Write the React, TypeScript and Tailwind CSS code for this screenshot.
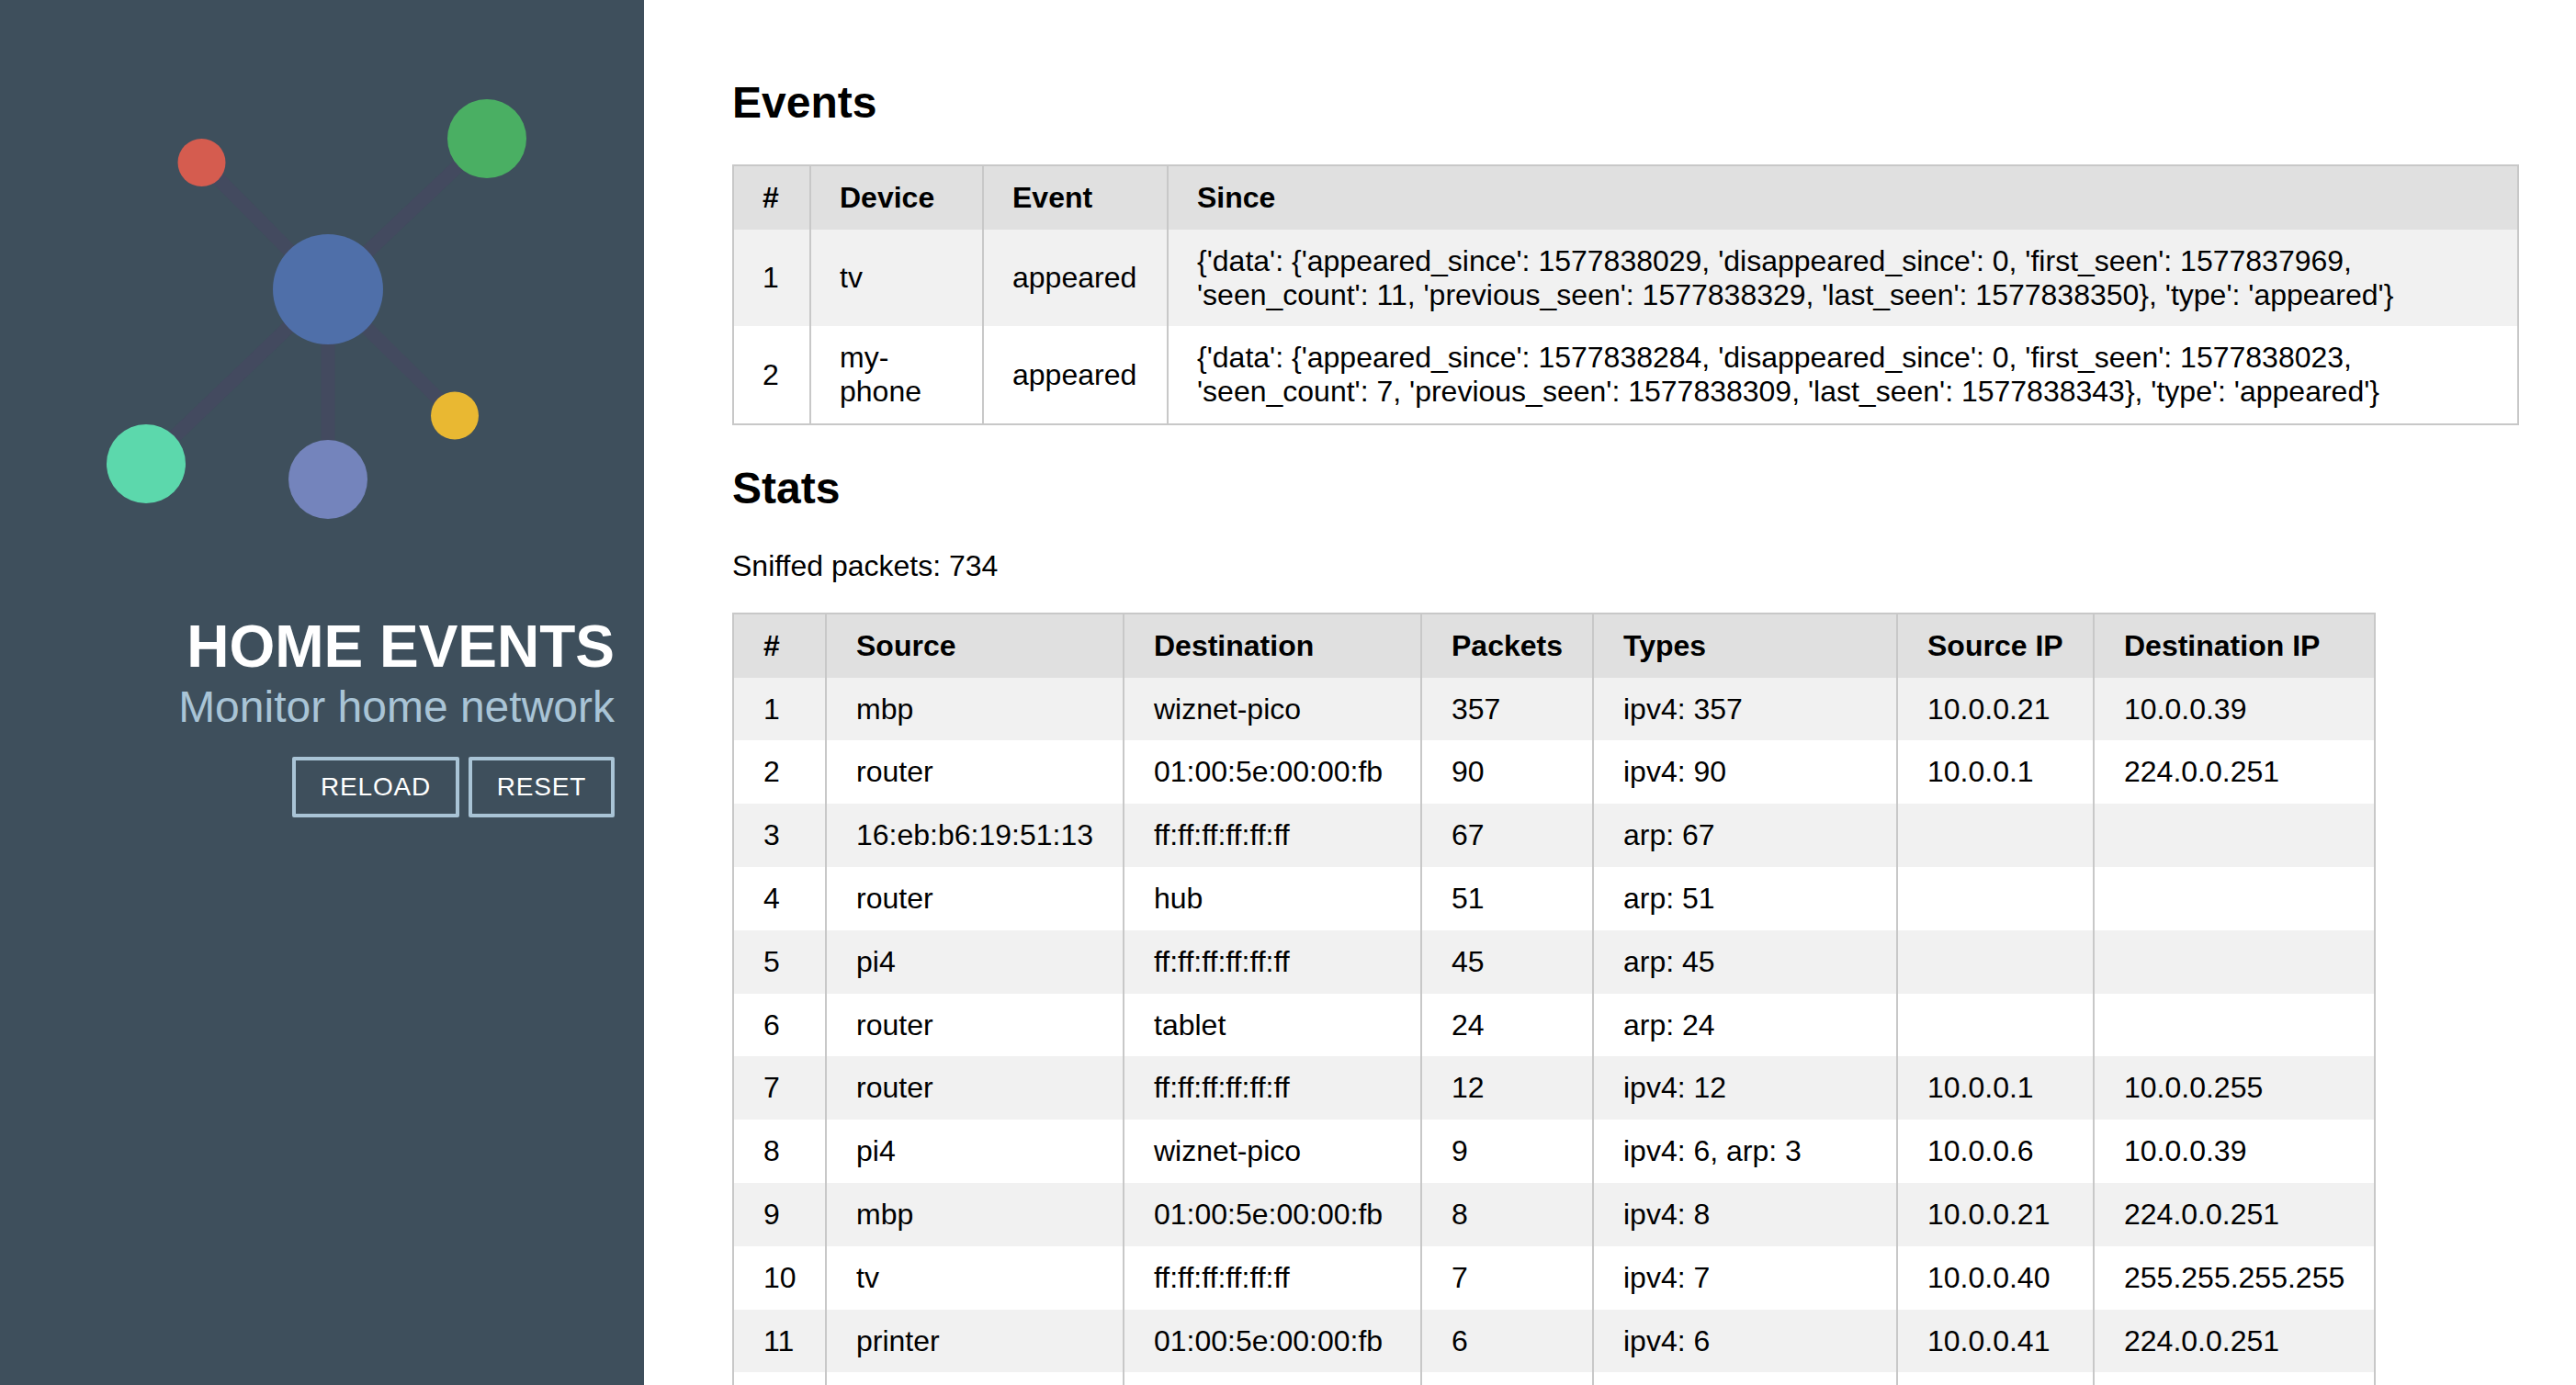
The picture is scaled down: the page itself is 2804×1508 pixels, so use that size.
const EVENTS = [
  {
    id: 1,
    device: 'tv',
    event: 'appeared',
    since: "{'data': {'appeared_since': 1577838029, 'disappeared_since': 0, 'first_seen': 1577837969, 'seen_count': 11, 'previous_seen': 1577838329, 'last_seen': 1577838350}, 'type': 'appeared'}",
  },
  {
    id: 2,
    device: 'my-phone',
    event: 'appeared',
    since: "{'data': {'appeared_since': 1577838284, 'disappeared_since': 0, 'first_seen': 1577838023, 'seen_count': 7, 'previous_seen': 1577838309, 'last_seen': 1577838343}, 'type': 'appeared'}",
  },
];

const STATS = [
  ['1', 'mbp', 'wiznet-pico', '357', 'ipv4: 357', '10.0.0.21', '10.0.0.39'],
  ['2', 'router', '01:00:5e:00:00:fb', '90', 'ipv4: 90', '10.0.0.1', '224.0.0.251'],
  ['3', '16:eb:b6:19:51:13', 'ff:ff:ff:ff:ff:ff', '67', 'arp: 67', '', ''],
  ['4', 'router', 'hub', '51', 'arp: 51', '', ''],
  ['5', 'pi4', 'ff:ff:ff:ff:ff:ff', '45', 'arp: 45', '', ''],
  ['6', 'router', 'tablet', '24', 'arp: 24', '', ''],
  ['7', 'router', 'ff:ff:ff:ff:ff:ff', '12', 'ipv4: 12', '10.0.0.1', '10.0.0.255'],
  ['8', 'pi4', 'wiznet-pico', '9', 'ipv4: 6, arp: 3', '10.0.0.6', '10.0.0.39'],
  ['9', 'mbp', '01:00:5e:00:00:fb', '8', 'ipv4: 8', '10.0.0.21', '224.0.0.251'],
  ['10', 'tv', 'ff:ff:ff:ff:ff:ff', '7', 'ipv4: 7', '10.0.0.40', '255.255.255.255'],
  ['11', 'printer', '01:00:5e:00:00:fb', '6', 'ipv4: 6', '10.0.0.41', '224.0.0.251'],
  ['', '', '', '', '', '', ''],
];

const STATS_HEAD = ['#', 'Source', 'Destination', 'Packets', 'Types', 'Source IP', 'Destination IP'];

const TH = 'border-x-2 border-[#c8c8c8] bg-[#e0e0e0] pl-[31px] pr-[32px] py-[16px] text-left font-bold';
const TD = 'border-x-2 border-[#c8c8c8] pl-[31px] pr-[32px] py-[16px] text-left';
const STATS_TH = 'border-x-2 border-[#c8c8c8] bg-[#e0e0e0] pl-[32px] pr-[32px] py-[16px] text-left font-bold';
const STATS_TD = 'border-x-2 border-[#c8c8c8] pl-[32px] pr-[32px] py-[16px] text-left';

function NetworkLogo() {
  return (
    <svg width="701" height="600" viewBox="0 0 701 600" className="block">
      <g stroke="#434a5f" strokeWidth="15">
        <line x1="357" y1="315" x2="530" y2="151" />
        <line x1="357" y1="315" x2="220" y2="177" />
        <line x1="357" y1="315" x2="495" y2="452" />
        <line x1="357" y1="315" x2="159" y2="505" />
        <line x1="357" y1="315" x2="357" y2="522" />
      </g>
      <circle cx="357" cy="315" r="60" fill="#4f6fa9" />
      <circle cx="530" cy="151" r="43" fill="#4aaf63" />
      <circle cx="219.5" cy="177" r="26" fill="#d55c4f" />
      <circle cx="495" cy="452.5" r="26" fill="#e9b832" />
      <circle cx="159" cy="505" r="43" fill="#5cd8ac" />
      <circle cx="357" cy="522" r="43" fill="#7484bc" />
    </svg>
  );
}

export default function App() {
  return (
    <div className="flex h-screen overflow-hidden bg-white font-['Liberation_Sans',Arial,sans-serif] text-[32px] leading-[36.8px] text-black">
      {/* Sidebar */}
      <aside className="w-[701px] flex-shrink-0 bg-[#3e4f5c] flex flex-col items-end pr-[32px]">
        <div className="-mr-[32px]">
          <NetworkLogo />
        </div>
        <h1 className="mt-[67px] text-[64px] leading-[74px] font-bold text-white">HOME EVENTS</h1>
        <p className="mt-[1px] text-[48px] leading-[55px] text-[#a9c4d6]">Monitor home network</p>
        <div className="mt-[27px] flex gap-[10px]">
          <button className="h-[66px] w-[182px] rounded-[2px] border-[4px] border-[#a9c4d6] text-[28px] tracking-[0.8px] text-white">RELOAD</button>
          <button className="h-[66px] w-[159px] rounded-[2px] border-[4px] border-[#a9c4d6] text-[28px] tracking-[0.8px] text-white">RESET</button>
        </div>
      </aside>

      {/* Main */}
      <main className="flex-1 min-w-0 pl-[96px] pr-[62px] pt-[84px]">
        <h2 className="mb-[40px] text-[48px] leading-[55px] font-bold">Events</h2>
        <table className="w-[1945px] table-fixed border-collapse border-2 border-[#c8c8c8]">
          <colgroup>
            <col className="w-[84px]" />
            <col className="w-[188px]" />
            <col className="w-[201px]" />
            <col />
          </colgroup>
          <thead>
            <tr>
              <th className={TH}>#</th>
              <th className={TH}>Device</th>
              <th className={TH}>Event</th>
              <th className={TH}>Since</th>
            </tr>
          </thead>
          <tbody>
            {EVENTS.map(row => (
              <tr key={row.id} className="even:bg-white odd:bg-[#f1f1f1]">
                <td className={TD}>{row.id}</td>
                <td className={TD}>{row.device}</td>
                <td className={TD}>{row.event}</td>
                <td className={TD}>{row.since}</td>
              </tr>
            ))}
          </tbody>
        </table>

        <h2 className="mt-[41px] mb-[39px] text-[48px] leading-[55px] font-bold">Stats</h2>
        <p className="mb-[32px]">Sniffed packets: 734</p>
        <table className="w-[1789px] table-fixed border-collapse border-2 border-[#c8c8c8]">
          <colgroup>
            <col className="w-[101px]" />
            <col className="w-[324px]" />
            <col className="w-[324px]" />
            <col className="w-[187px]" />
            <col className="w-[331px]" />
            <col className="w-[214px]" />
            <col />
          </colgroup>
          <thead>
            <tr>
              {STATS_HEAD.map(h => (
                <th key={h} className={STATS_TH}>{h}</th>
              ))}
            </tr>
          </thead>
          <tbody>
            {STATS.map((row, i) => (
              <tr key={i} className="h-[68.8px] even:bg-white odd:bg-[#f1f1f1]">
                {row.map((cell, j) => (
                  <td key={j} className={STATS_TD}>{cell}</td>
                ))}
              </tr>
            ))}
          </tbody>
        </table>
      </main>
    </div>
  );
}
